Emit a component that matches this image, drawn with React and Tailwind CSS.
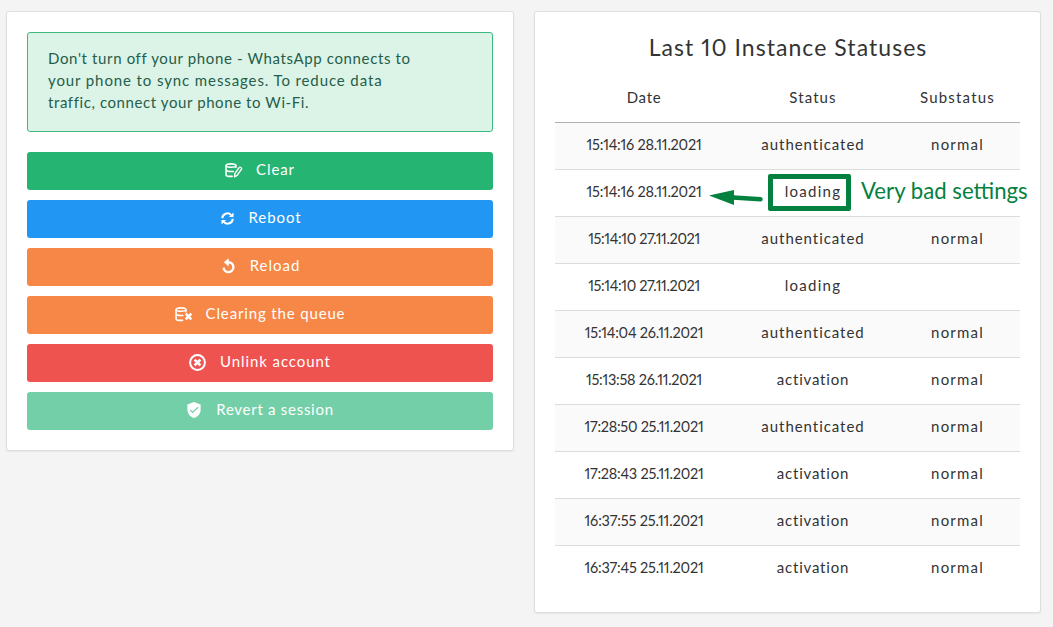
const DatabaseEdit = () => (
  <svg className="-mt-px h-[15px] w-[18px] shrink-0" viewBox="0 0 18 15" fill="none" stroke="currentColor" strokeWidth="1.6" strokeLinecap="round" strokeLinejoin="round">
    <ellipse cx="6" cy="2.6" rx="4.9" ry="1.7" />
    <path d="M1.1 2.8v9.1c0 .9 1.8 1.5 4.6 1.5h1.4M1.1 7.1c.5.9 2.3 1.4 4.9 1.4h2.4M10.9 2.8v1.6" />
    <path d="M9.5 13.8l.3-3.2 4.5-6.2c.6-.8 2.9.6 2.3 1.6l-4.5 6.4z" strokeWidth="1.4" />
  </svg>
);

const DatabaseRemove = () => (
  <svg className="-mt-0.5 h-[15px] w-[18px] shrink-0" viewBox="0 0 18 15" fill="none" stroke="currentColor" strokeWidth="1.6" strokeLinecap="round">
    <ellipse cx="6" cy="2.6" rx="4.9" ry="1.7" />
    <path d="M1.1 2.8v9.1c0 .9 1.8 1.5 4.7 1.5h1.8M1.1 7.1c.5.9 2.3 1.4 4.9 1.4h1.8M10.9 2.8v2" />
    <path d="M10.7 6.6l5.6 5.8M16.3 6.6l-5.6 5.8" strokeWidth="2.6" strokeLinecap="butt" />
  </svg>
);

const Sync = () => (
  <svg className="-mt-0.5 h-[13px] w-[13px] shrink-0" viewBox="0 0 13 13" fill="none" stroke="currentColor" strokeWidth="2.1">
    <path d="M1.3 6.3a5 5 0 0 1 8.8-3.2M11.7 6.7a5 5 0 0 1-8.8 3.2" />
    <path d="M12.5.4v4.7H7.9zM.5 12.6V7.9h4.6z" fill="currentColor" stroke="none" />
  </svg>
);

const Restart = () => (
  <svg className="-mt-0.5 h-[16px] w-[13px] shrink-0" viewBox="0 0 13 16" fill="none" stroke="currentColor" strokeWidth="2.4">
    <path d="M5.5 4.3h1a4.9 4.9 0 1 1-4.9 5.3" />
    <path d="M6.7.2v8.2L1.8 4.3z" fill="currentColor" stroke="none" />
  </svg>
);

const CircleCross = () => (
  <svg className="-mt-0.5 h-[17px] w-[17px] shrink-0" viewBox="0 0 17 17" fill="none" stroke="currentColor" strokeWidth="2">
    <circle cx="8.5" cy="8.5" r="7.4" />
    <path d="M5.6 5.6l5.8 5.8M11.4 5.6l-5.8 5.8" strokeWidth="2.7" />
  </svg>
);

const ShieldCheck = () => (
  <svg className="-mt-0.5 h-[16px] w-[14px] shrink-0" viewBox="0 0 14 16" fill="none">
    <path d="M7 0l6.6 2.5v5.3c0 4-2.7 7-6.6 8.2C3.1 14.8.4 11.8.4 7.8V2.5z" fill="currentColor" />
    <path d="M3.2 7.9l2.5 2.5L11 5.3" stroke="#73cfa7" strokeWidth="1.2" />
  </svg>
);

const actions = [
  { label: "Clear", Icon: DatabaseEdit, style: "bg-[#26b472] gap-[13px] tracking-[0.9px]" },
  { label: "Reboot", Icon: Sync, style: "bg-[#2196f3] gap-[15px] pl-0.5 tracking-[0.9px]" },
  { label: "Reload", Icon: Restart, style: "bg-[#f68746] gap-[15px] pl-0.5 tracking-[1px]" },
  { label: "Clearing the queue", Icon: DatabaseRemove, style: "bg-[#f68746] gap-[13px] tracking-[0.85px]" },
  { label: "Unlink account", Icon: CircleCross, style: "bg-[#ef5350] gap-[14px] tracking-[0.9px]" },
  { label: "Revert a session", Icon: ShieldCheck, style: "bg-[#73cfa7] gap-[15px] pl-px tracking-[0.72px]" },
];

const statusTracking = {
  authenticated: "tracking-[0.95px]",
  loading: "tracking-[1.25px]",
  activation: "tracking-[0.8px]",
};

const rows = [
  ["15:14:16 28.11.2021", "authenticated", "normal", "tracking-[-0.22px]"],
  ["15:14:16 28.11.2021", "loading", "", "tracking-[-0.22px]"],
  ["15:14:10 27.11.2021", "authenticated", "normal", "tracking-[-0.36px]"],
  ["15:14:10 27.11.2021", "loading", "", "tracking-[-0.36px]"],
  ["15:14:04 26.11.2021", "authenticated", "normal", "tracking-[-0.24px]"],
  ["15:13:58 26.11.2021", "activation", "normal", "tracking-[-0.25px]"],
  ["17:28:50 25.11.2021", "authenticated", "normal", "tracking-[-0.26px]"],
  ["17:28:43 25.11.2021", "activation", "normal", "tracking-[-0.24px]"],
  ["16:37:55 25.11.2021", "activation", "normal", "tracking-[-0.17px]"],
  ["16:37:45 25.11.2021", "activation", "normal", "tracking-[-0.21px]"],
];

const cardStyle = "rounded-[3px] border border-[#dedede] bg-white p-5 shadow-[0_1px_2px_rgba(0,0,0,0.06)]";

function Annotation() {
  return (
    <>
      <svg className="absolute -left-[104px] top-[13px] h-[30px] w-[56px]" viewBox="0 0 56 30">
        <path d="M24 14.5L51.500 16.300" stroke="#04803f" strokeWidth="4.5" strokeLinecap="round" />
        <path d="M0 12.400L25 7v15z" fill="#04803f" />
      </svg>
      <span className="absolute -left-[45px] top-[4px] h-[37px] w-[83px] rounded-[2px] border-[5px] border-[#04803f]" />
      <span className="absolute left-[48px] top-[7px] whitespace-nowrap text-[22.2px] leading-[28px] tracking-normal text-[#04803f]">
        Very bad settings
      </span>
    </>
  );
}

export default function App() {
  return (
    <div className="flex h-[627px] w-[1053px] items-start gap-5 overflow-hidden bg-[#f4f4f4] pl-1.5 pt-[11px] font-['Lato',sans-serif] text-[15px] text-[#333] [font-variant-numeric:proportional-nums]">
      <section className={`h-[440px] w-[508px] shrink-0 ${cardStyle}`}>
        <div className="h-[100px] whitespace-nowrap rounded-[3px] border border-[#3dba80] bg-[#dcf3e7] pl-5 pt-[14px] leading-[22px] text-[#255e4a]">
          <p className="tracking-[0.63px]">Don't turn off your phone - WhatsApp connects to</p>
          <p className="tracking-[0.89px]">your phone to sync messages. To reduce data</p>
          <p className="tracking-[0.59px]">traffic, connect your phone to Wi-Fi.</p>
        </div>
        <div className="mt-5 flex flex-col gap-2.5">
          {actions.map(({ label, Icon, style }) => (
            <button key={label} className={`flex h-[38px] items-center justify-center rounded-[3px] text-white ${style}`}>
              <Icon />
              <span className="-mt-1">{label}</span>
            </button>
          ))}
        </div>
      </section>

      <section className={`h-[602px] w-[507px] shrink-0 ${cardStyle}`}>
        <h2 className="h-[42px] pl-px text-center text-[23px] leading-[30px] tracking-[1.05px]">Last 10 Instance Statuses</h2>
        <div className="grid h-[49px] grid-cols-[177px_161px_127px] border-b border-[#b0b0b0] pt-[12px] text-center leading-[22px]">
          <span className="pl-px tracking-[0.7px]">Date</span>
          <span className="pl-px tracking-[1.1px]">Status</span>
          <span className="pl-0.5 tracking-[1.2px]">Substatus</span>
        </div>
        {rows.map(([date, status, substatus, tracking], i) => (
          <div
            key={i}
            className={`grid h-[47px] grid-cols-[177px_161px_127px] text-center leading-[42px] ${i % 2 ? "bg-white" : "bg-[#fafafa]"} ${i < 9 ? "border-b border-[#dcdcdc]" : ""}`}
          >
            <span className={`pl-px text-[14.5px] leading-[44px] ${tracking}`}>{date}</span>
            <span className={`pl-px ${statusTracking[status]}`}>
              {i === 1 ? (
                <span className="relative block">
                  {status}
                  <span className="absolute left-1/2 top-0">
                    <Annotation />
                  </span>
                </span>
              ) : (
                status
              )}
            </span>
            <span className="pl-0.5 tracking-[1.2px]">{substatus}</span>
          </div>
        ))}
      </section>
    </div>
  );
}
